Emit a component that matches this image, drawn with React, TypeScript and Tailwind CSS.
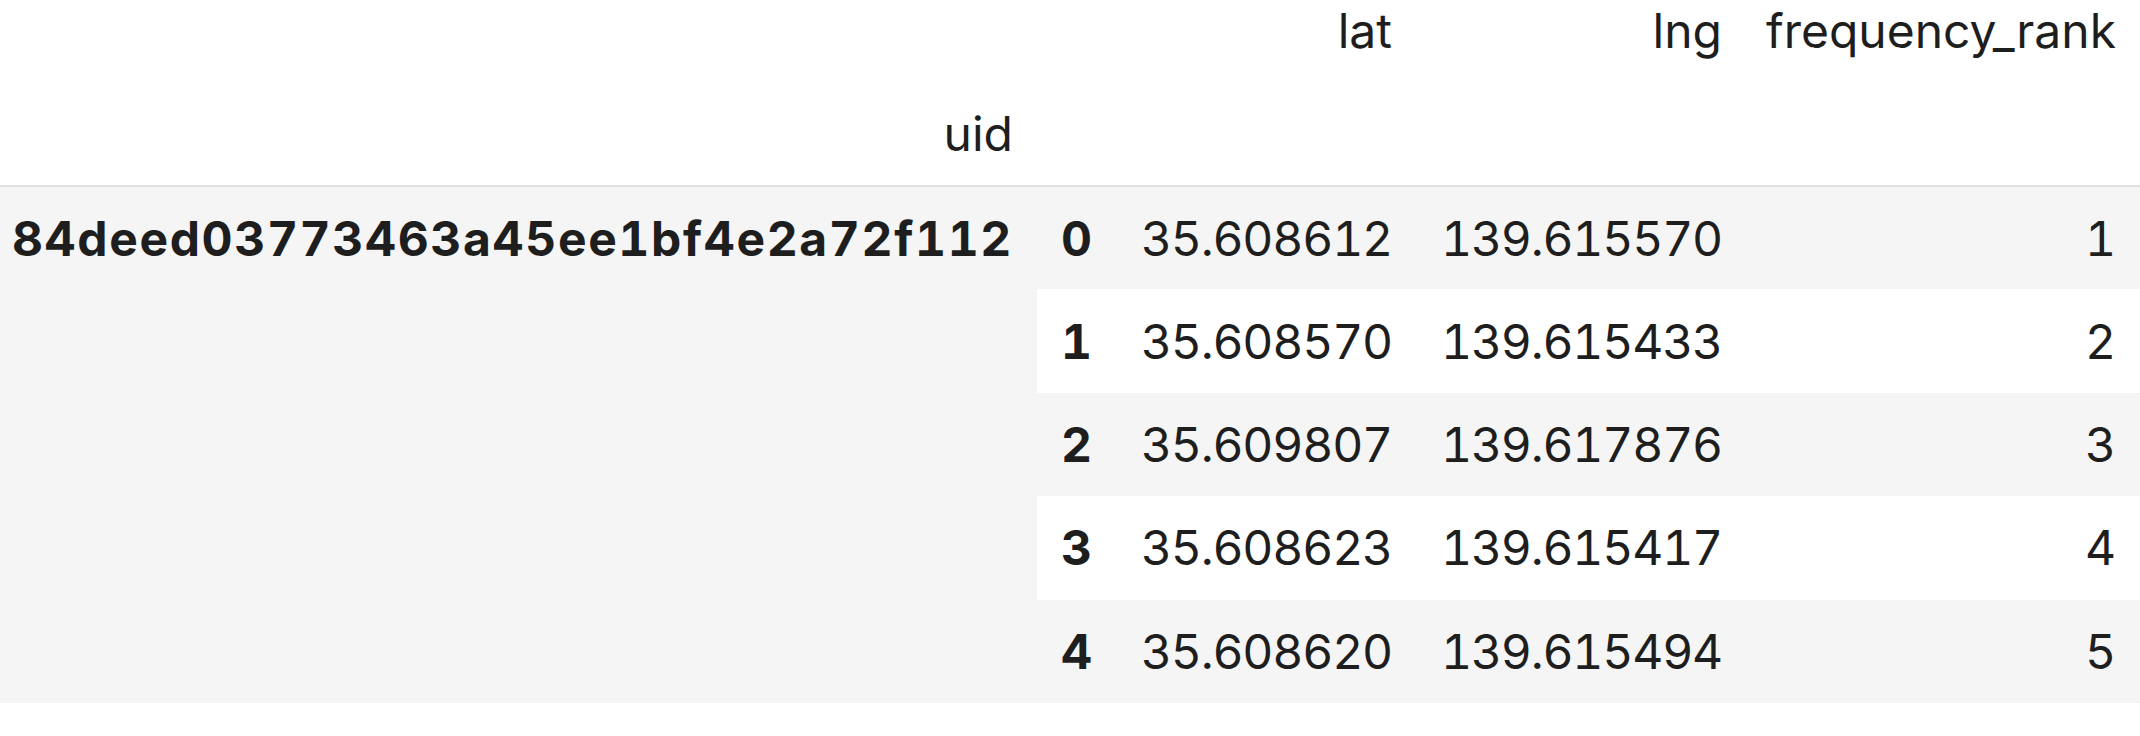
import React from 'react';

// dataframe preview: top 5 frequent places for one uid
const rows = [
  { idx: 0, lat: '35.608612', lng: '139.615570', rank: 1 },
  { idx: 1, lat: '35.608570', lng: '139.615433', rank: 2 },
  { idx: 2, lat: '35.609807', lng: '139.617876', rank: 3 },
  { idx: 3, lat: '35.608623', lng: '139.615417', rank: 4 },
  { idx: 4, lat: '35.608620', lng: '139.615494', rank: 5 },
];

const App = () => {
  return (
    <div className="w-[2140px] h-[736px] overflow-hidden bg-white font-['Inter','Liberation_Sans',sans-serif] text-[48px] leading-[55px] tabular-nums text-[#1e1e1e]">
      <table className="table-fixed border-collapse w-[2140px]">
        <colgroup>
          <col className="w-[1037px]" />
          <col className="w-[79px]" />
          <col className="w-[300px]" />
          <col className="w-[330px]" />
          <col className="w-[394px]" />
        </colgroup>
        <thead className="border-b-2 border-[#e0e0e0]">
          <tr className="h-[82px]">
            <th className="p-0" />
            <th className="p-0" />
            <th className="pr-6 pt-[3px] align-top text-right font-normal">lat</th>
            <th className="pr-6 pt-[3px] align-top text-right font-normal">lng</th>
            <th className="pr-6 pt-[3px] align-top text-right font-normal whitespace-nowrap">frequency_rank</th>
          </tr>
          <tr className="h-[104px]">
            <th className="pr-6 align-middle text-right font-normal">uid</th>
            <th />
            <th />
            <th />
            <th />
          </tr>
        </thead>
        <tbody>
          {rows.map((row, i) => {
            const bg = i % 2 === 0 ? 'bg-[#f5f5f5]' : 'bg-white';
            return (
              <tr key={row.idx} className={`h-[103.4px] ${bg}`}>
                {i === 0 && (
                  <th
                    rowSpan={5}
                    className="bg-[#f5f5f5] pr-6 pt-6 align-top text-right font-bold tracking-[1.65px] whitespace-nowrap"
                  >
                    84deed03773463a45ee1bf4e2a72f112
                  </th>
                )}
                <th className="pr-6 align-middle text-right font-bold">{row.idx}</th>
                <td className="pr-6 align-middle text-right tracking-[-1.2px]">{row.lat}</td>
                <td className="pr-6 align-middle text-right tracking-[-1.2px]">{row.lng}</td>
                <td className="pr-6 align-middle text-right">{row.rank}</td>
              </tr>
            );
          })}
        </tbody>
      </table>
    </div>
  );
};

export default App;
